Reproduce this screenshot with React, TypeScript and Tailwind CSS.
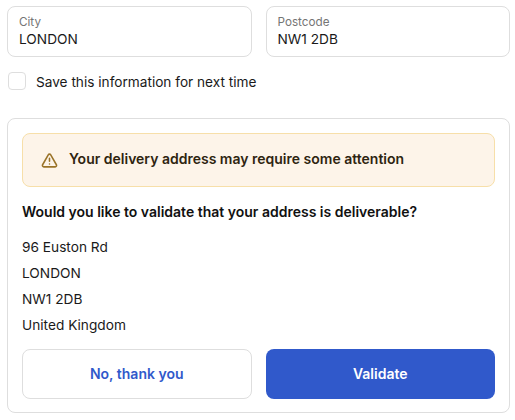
import { TriangleAlert } from 'lucide-react'

function Field({ label, value }: { label: string; value: string }) {
  return (
    <div className="flex h-[51px] flex-col rounded-lg border border-[#dedede] bg-white px-[11px] pt-[8px]">
      <span className="text-[11.7px] leading-[14px] text-[#757575]">{label}</span>
      <span className="text-[13.7px] leading-[20px] text-[#1a1a1a]">{value}</span>
    </div>
  )
}

export default function App() {
  return (
    <div className="h-[420px] w-[515px] bg-white px-[7px] pt-[6px] font-['Inter',sans-serif] text-[#1a1a1a]">
      <div className="grid w-[503px] grid-cols-2 gap-[14px]">
        <Field label="City" value="LONDON" />
        <Field label="Postcode" value="NW1 2DB" />
      </div>

      <label className="mt-[15px] ml-px flex h-[18px] items-center gap-[10px]">
        <span className="h-[18px] w-[18px] rounded border border-[#dedede] bg-white" />
        <span className="pt-[2px] text-[13.65px] leading-[20px]">Save this information for next time</span>
      </label>

      <div className="mt-[28px] h-[295px] w-[503px] rounded-lg border border-[#dedede] bg-white p-[14px]">
        <div className="flex h-[54px] items-center gap-[11px] rounded-lg border border-[#f7dfa9] bg-[#fdf4e9] px-[18px] pb-[2px]">
          <TriangleAlert size={17} strokeWidth={2.2} className="mt-[2px] text-[#9a7328]" />
          <span className="text-sm font-semibold text-[#2e2410]">Your delivery address may require some attention</span>
        </div>

        <p className="mt-[15px] text-sm leading-[20px] font-semibold text-[#111111]">
          Would you like to validate that your address is deliverable?
        </p>

        <div className="mt-[15px] flex flex-col gap-[6px] text-[13.7px] leading-[20px]">
          <span>96 Euston Rd</span>
          <span>LONDON</span>
          <span>NW1 2DB</span>
          <span>United Kingdom</span>
        </div>

        <div className="mt-[14px] grid grid-cols-2 gap-[14px]">
          <button className="h-[50px] rounded-lg border border-[#dedede] bg-white text-sm font-semibold text-[#3059cb]">
            No, thank you
          </button>
          <button className="h-[50px] rounded-lg bg-[#3059cb] text-sm font-semibold text-white">
            Validate
          </button>
        </div>
      </div>
    </div>
  )
}
